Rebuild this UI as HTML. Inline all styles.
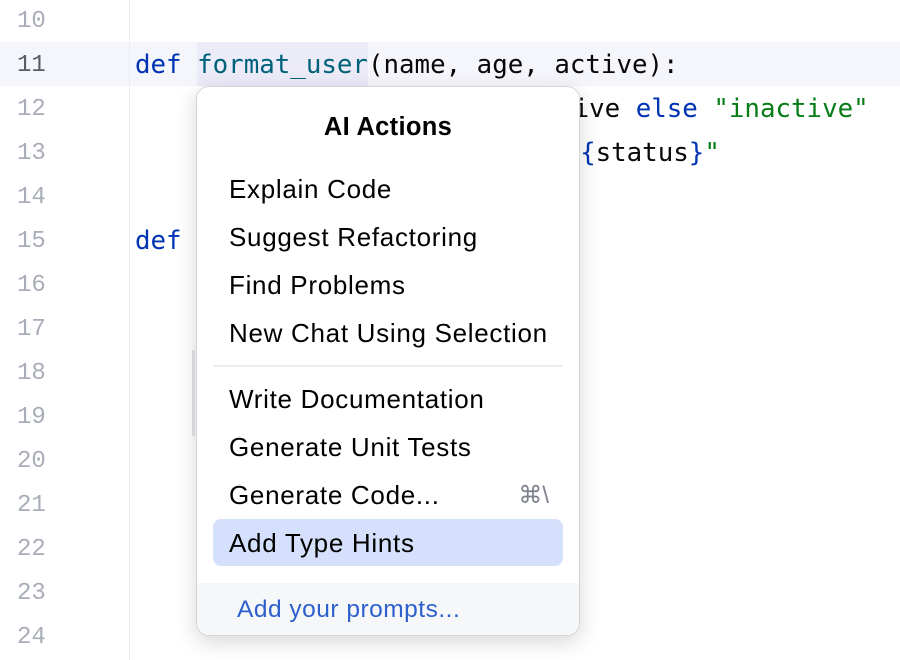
<!DOCTYPE html>
<html><head><meta charset="utf-8"><style>
html,body{margin:0;padding:0;background:#fff;width:900px;height:660px;overflow:hidden;position:relative}
.mono{font-family:"DejaVu Sans Mono","Liberation Mono",monospace;font-size:25.8px;letter-spacing:0}
.ln{position:absolute;left:17px;width:40px;color:#a8adb9;font-family:"Liberation Mono",monospace;font-size:24px;height:44px;line-height:44px}
.code{position:absolute;height:44px;line-height:44px;white-space:pre;color:#080808}
.kw{color:#0033b3}.fn{color:#00627a}.st{color:#067d17}
#cur{position:absolute;left:0;top:42px;width:900px;height:44px;background:#f5f6fc}
#gut{position:absolute;left:129px;top:0;width:1px;height:660px;background:#ebecf0}
#pop{position:absolute;left:196px;top:86px;width:384px;height:550px;background:#fff;border:1px solid #d3d5db;border-radius:13px;box-sizing:border-box;box-shadow:0 6px 22px rgba(0,0,0,0.16);overflow:hidden;font-family:"Liberation Sans",sans-serif;color:#000}
.it{position:absolute;left:32px;font-size:26px;letter-spacing:0.7px;line-height:30px;height:30px;white-space:nowrap}
</style></head><body>
<div id="cur"></div>
<div id="gut"></div>
<div style="position:absolute;left:197px;top:42px;width:171px;height:44px;background:#ecebf8"></div>
<div class="ln" style="top:0">10</div>
<div class="ln" style="top:44px;color:#5a5d66">11</div>
<div class="ln" style="top:88px">12</div>
<div class="ln" style="top:132px">13</div>
<div class="ln" style="top:176px">14</div>
<div class="ln" style="top:220px">15</div>
<div class="ln" style="top:264px">16</div>
<div class="ln" style="top:308px">17</div>
<div class="ln" style="top:352px">18</div>
<div class="ln" style="top:396px">19</div>
<div class="ln" style="top:440px">20</div>
<div class="ln" style="top:484px">21</div>
<div class="ln" style="top:528px">22</div>
<div class="ln" style="top:572px">23</div>
<div class="ln" style="top:616px">24</div>
<div class="code mono" style="left:135px;top:43px"><span class="kw">def</span> <span class="fn">format_user</span>(name, age, active):</div>
<div class="code mono" style="left:527px;top:87px">active <span class="kw">else</span> <span class="st">"inactive"</span></div>
<div class="code mono" style="left:549px;top:131px"><span class="st">-</span> <span class="kw">{</span>status<span class="kw">}</span><span class="st">"</span></div>
<div class="code mono" style="left:135px;top:219px"><span class="kw">def</span></div>
<div style="position:absolute;left:192px;top:350px;width:3px;height:86px;background:#e4e5e9"></div>
<div id="pop">
<div style="position:absolute;left:0;right:0;top:25px;text-align:center;font-weight:bold;font-size:25.5px;letter-spacing:0.3px;line-height:30px">AI Actions</div>
<div class="it" style="top:87px">Explain Code</div>
<div class="it" style="top:135px">Suggest Refactoring</div>
<div class="it" style="top:183px">Find Problems</div>
<div class="it" style="top:231px">New Chat Using Selection</div>
<div style="position:absolute;left:16px;right:16px;top:278px;height:2px;background:#ebecf0"></div>
<div class="it" style="top:297px">Write Documentation</div>
<div class="it" style="top:345px">Generate Unit Tests</div>
<div class="it" style="top:393px">Generate Code...</div>
<div style="position:absolute;right:30px;top:394px;font-size:24px;line-height:30px;color:#7d818c">⌘\</div>
<div style="position:absolute;left:16px;right:16px;top:432px;height:47px;background:#d5e0fc;border-radius:8px"></div>
<div class="it" style="top:441px">Add Type Hints</div>
<div style="position:absolute;left:0;right:0;top:496px;bottom:0;background:#f6f7f9"></div>
<div class="it" style="top:508px;left:40px;color:#2d5fcd;font-size:24.5px;letter-spacing:0.5px">Add your prompts...</div>
</div>
</body></html>
